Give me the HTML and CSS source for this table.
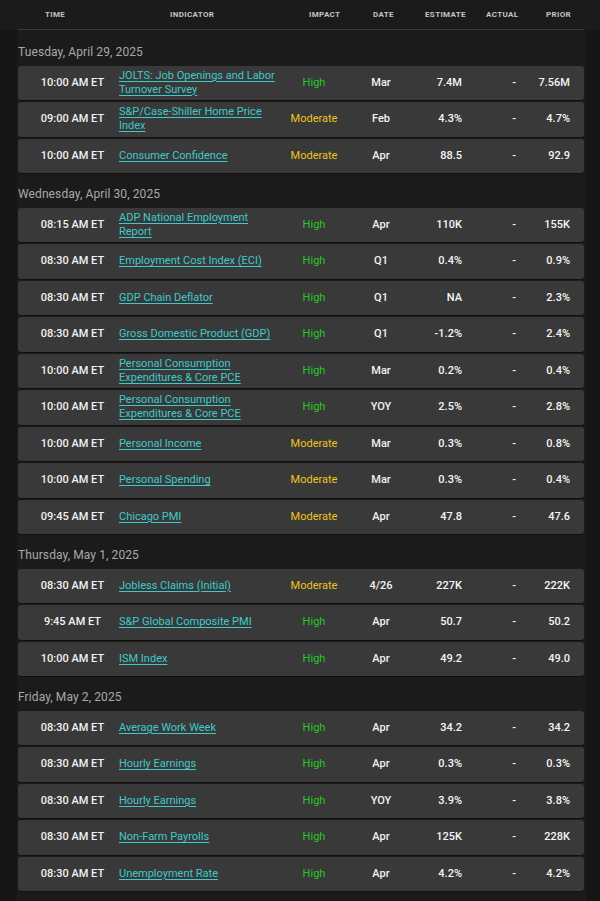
FILE: index.html
```html
<!DOCTYPE html>
<html lang="en">
<head>
<meta charset="utf-8">
<title>Economic Calendar</title>
<link rel="stylesheet" href="styles.css">
</head>
<body>
<div class="page">
  <div class="thead-wrap">
    <div class="thead">
      <div class="h-time">Time</div>
      <div class="h-ind">Indicator</div>
      <div class="h-imp">Impact</div>
      <div class="h-date">Date</div>
      <div class="h-est">Estimate</div>
      <div class="h-act">Actual</div>
      <div class="h-prior">Prior</div>
    </div>
  </div>
  <div class="panel">
    <section class="day">
      <h2 class="day-title">Tuesday, April 29, 2025</h2>
      <div class="row"><div class="c-time">10:00 AM ET</div><div class="c-ind"><a href="#">JOLTS: Job Openings and Labor Turnover Survey</a></div><div class="c-imp high">High</div><div class="c-date">Mar</div><div class="c-est">7.4M</div><div class="c-act">-</div><div class="c-prior">7.56M</div></div>
      <div class="row"><div class="c-time">09:00 AM ET</div><div class="c-ind"><a href="#">S&amp;P/Case-Shiller Home Price Index</a></div><div class="c-imp mod">Moderate</div><div class="c-date">Feb</div><div class="c-est">4.3%</div><div class="c-act">-</div><div class="c-prior">4.7%</div></div>
      <div class="row"><div class="c-time">10:00 AM ET</div><div class="c-ind"><a href="#">Consumer Confidence</a></div><div class="c-imp mod">Moderate</div><div class="c-date">Apr</div><div class="c-est">88.5</div><div class="c-act">-</div><div class="c-prior">92.9</div></div>
    </section>
    <section class="day">
      <h2 class="day-title">Wednesday, April 30, 2025</h2>
      <div class="row"><div class="c-time">08:15 AM ET</div><div class="c-ind"><a href="#">ADP National Employment Report</a></div><div class="c-imp high">High</div><div class="c-date">Apr</div><div class="c-est">110K</div><div class="c-act">-</div><div class="c-prior">155K</div></div>
      <div class="row"><div class="c-time">08:30 AM ET</div><div class="c-ind"><a href="#">Employment Cost Index (ECI)</a></div><div class="c-imp high">High</div><div class="c-date">Q1</div><div class="c-est">0.4%</div><div class="c-act">-</div><div class="c-prior">0.9%</div></div>
      <div class="row"><div class="c-time">08:30 AM ET</div><div class="c-ind"><a href="#">GDP Chain Deflator</a></div><div class="c-imp high">High</div><div class="c-date">Q1</div><div class="c-est">NA</div><div class="c-act">-</div><div class="c-prior">2.3%</div></div>
      <div class="row"><div class="c-time">08:30 AM ET</div><div class="c-ind"><a href="#">Gross Domestic Product (GDP)</a></div><div class="c-imp high">High</div><div class="c-date">Q1</div><div class="c-est">-1.2%</div><div class="c-act">-</div><div class="c-prior">2.4%</div></div>
      <div class="row"><div class="c-time">10:00 AM ET</div><div class="c-ind"><a href="#">Personal Consumption Expenditures &amp; Core PCE</a></div><div class="c-imp high">High</div><div class="c-date">Mar</div><div class="c-est">0.2%</div><div class="c-act">-</div><div class="c-prior">0.4%</div></div>
      <div class="row"><div class="c-time">10:00 AM ET</div><div class="c-ind"><a href="#">Personal Consumption Expenditures &amp; Core PCE</a></div><div class="c-imp high">High</div><div class="c-date">YOY</div><div class="c-est">2.5%</div><div class="c-act">-</div><div class="c-prior">2.8%</div></div>
      <div class="row"><div class="c-time">10:00 AM ET</div><div class="c-ind"><a href="#">Personal Income</a></div><div class="c-imp mod">Moderate</div><div class="c-date">Mar</div><div class="c-est">0.3%</div><div class="c-act">-</div><div class="c-prior">0.8%</div></div>
      <div class="row"><div class="c-time">10:00 AM ET</div><div class="c-ind"><a href="#">Personal Spending</a></div><div class="c-imp mod">Moderate</div><div class="c-date">Mar</div><div class="c-est">0.3%</div><div class="c-act">-</div><div class="c-prior">0.4%</div></div>
      <div class="row"><div class="c-time">09:45 AM ET</div><div class="c-ind"><a href="#">Chicago PMI</a></div><div class="c-imp mod">Moderate</div><div class="c-date">Apr</div><div class="c-est">47.8</div><div class="c-act">-</div><div class="c-prior">47.6</div></div>
    </section>
    <section class="day">
      <h2 class="day-title">Thursday, May 1, 2025</h2>
      <div class="row"><div class="c-time">08:30 AM ET</div><div class="c-ind"><a href="#">Jobless Claims (Initial)</a></div><div class="c-imp mod">Moderate</div><div class="c-date">4/26</div><div class="c-est">227K</div><div class="c-act">-</div><div class="c-prior">222K</div></div>
      <div class="row"><div class="c-time">9:45 AM ET</div><div class="c-ind"><a href="#">S&amp;P Global Composite PMI</a></div><div class="c-imp high">High</div><div class="c-date">Apr</div><div class="c-est">50.7</div><div class="c-act">-</div><div class="c-prior">50.2</div></div>
      <div class="row"><div class="c-time">10:00 AM ET</div><div class="c-ind"><a href="#">ISM Index</a></div><div class="c-imp high">High</div><div class="c-date">Apr</div><div class="c-est">49.2</div><div class="c-act">-</div><div class="c-prior">49.0</div></div>
    </section>
    <section class="day">
      <h2 class="day-title">Friday, May 2, 2025</h2>
      <div class="row"><div class="c-time">08:30 AM ET</div><div class="c-ind"><a href="#">Average Work Week</a></div><div class="c-imp high">High</div><div class="c-date">Apr</div><div class="c-est">34.2</div><div class="c-act">-</div><div class="c-prior">34.2</div></div>
      <div class="row"><div class="c-time">08:30 AM ET</div><div class="c-ind"><a href="#">Hourly Earnings</a></div><div class="c-imp high">High</div><div class="c-date">Apr</div><div class="c-est">0.3%</div><div class="c-act">-</div><div class="c-prior">0.3%</div></div>
      <div class="row"><div class="c-time">08:30 AM ET</div><div class="c-ind"><a href="#">Hourly Earnings</a></div><div class="c-imp high">High</div><div class="c-date">YOY</div><div class="c-est">3.9%</div><div class="c-act">-</div><div class="c-prior">3.8%</div></div>
      <div class="row"><div class="c-time">08:30 AM ET</div><div class="c-ind"><a href="#">Non-Farm Payrolls</a></div><div class="c-imp high">High</div><div class="c-date">Apr</div><div class="c-est">125K</div><div class="c-act">-</div><div class="c-prior">228K</div></div>
      <div class="row"><div class="c-time">08:30 AM ET</div><div class="c-ind"><a href="#">Unemployment Rate</a></div><div class="c-imp high">High</div><div class="c-date">Apr</div><div class="c-est">4.2%</div><div class="c-act">-</div><div class="c-prior">4.2%</div></div>
    </section>
  </div>
</div>
</body>
</html>
```

FILE: styles.css
```css
* { box-sizing: border-box; }
html, body {
  margin: 0;
  padding: 0;
  background: #151515;
  height: 100%;
}
body {
  font-family: Roboto, "Liberation Sans", Arial, sans-serif;
  color: #fff;
  -webkit-font-smoothing: antialiased;
}
.page {
  min-height: 100%;
  display: flex;
  flex-direction: column;
}
.thead-wrap {
  background: #1b1b1b;
  padding: 0 16px 0 18px;
}
.thead {
  display: grid;
  grid-template-columns: 101px 160px 70px 64px 57px 54px 60px;
  height: 30px;
  border-bottom: 1px solid #3b3b3b;
  font-size: 8px;
  font-weight: 700;
  letter-spacing: 0.35px;
  text-transform: uppercase;
  color: #c4c4c4;
  line-height: 29px;
}
.h-time { padding-left: 27px; }
.h-ind { padding-left: 51px; }
.h-imp { padding-left: 30px; }
.h-date { padding-left: 24px; }
.h-est { padding-left: 12px; }
.h-act { padding-left: 16px; }
.h-prior { padding-left: 22px; }

.panel {
  flex: 1;
  background: #1b1b1b;
  margin: 0 14px 0 17px;
  padding: 3px 2px 0 1px;
}
.day {
  display: flow-root;
}
.day-title {
  margin: 11.5px 0 6px;
  font-size: 12px;
  line-height: 15px;
  font-weight: 400;
  color: #a9a9a9;
  letter-spacing: 0.1px;
}
.row {
  display: grid;
  grid-template-columns: 101px 160px 70px 64px 57px 54px 60px;
  align-items: center;
  height: 34.5px;
  margin-bottom: 2px;
  background: #393939;
  border-radius: 3px;
  box-shadow: 0 1px 0 rgba(0, 0, 0, 0.35);
  font-size: 11px;
  line-height: 14px;
  font-weight: 500;
}
.c-time {
  text-align: center;
  padding-left: 8px;
  color: #f2f2f2;
}
.c-ind a {
  color: #3fcaca;
  font-weight: 400;
  text-decoration: underline;
  text-underline-offset: 2px;
  text-decoration-thickness: 1px;
}
.c-imp {
  text-align: center;
  font-weight: 400;
}
.c-imp.high { color: #25c825; }
.c-imp.mod { color: #f0c419; }
.c-date { text-align: center; color: #f2f2f2; }
.c-est { text-align: right; padding-right: 8px; color: #f5f5f5; }
.c-act { text-align: right; padding-right: 8px; color: #f5f5f5; }
.c-prior { text-align: right; padding-right: 14px; color: #f5f5f5; }
```
